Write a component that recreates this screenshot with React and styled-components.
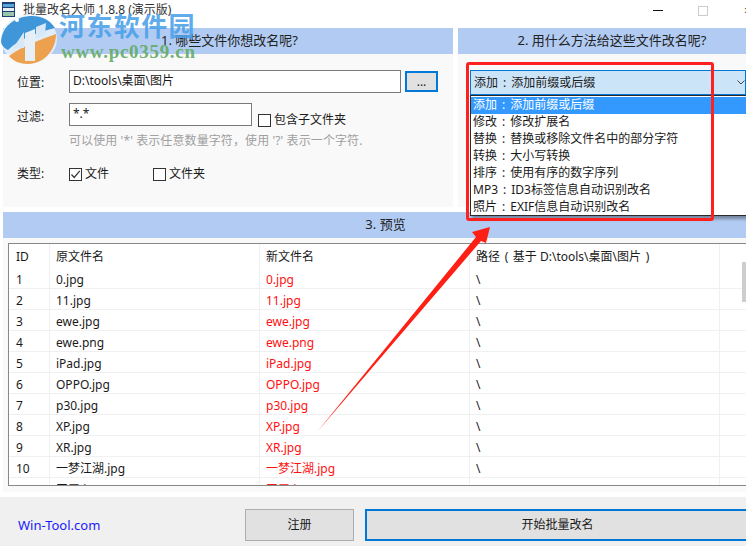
import styled, { createGlobalStyle } from 'styled-components';

const FONT = '"Noto Sans", "Noto Sans CJK SC", sans-serif';

const GlobalStyle = createGlobalStyle`
  html, body {
    margin: 0;
    padding: 0;
    background: #fff;
  }
  * {
    box-sizing: border-box;
  }
`;

const Window = styled.div`
  position: relative;
  width: 746px;
  height: 546px;
  overflow: hidden;
  background: #fff;
  color: #1a1a1a;
  font-family: ${FONT};
  font-size: 12px;
  display: flex;
  flex-direction: column;
`;

const TitleBar = styled.div`
  height: 28px;
  flex: none;
  display: flex;
  align-items: flex-start;
  padding: 1px 0 0 1px;
  position: relative;
`;

const TitleText = styled.span`
  margin-left: 7px;
  line-height: 18px;
  color: #333;
`;

const WinControls = styled.div`
  margin-left: auto;
  display: flex;
  align-items: flex-start;
`;

const MinBtn = styled.span`
  width: 10px;
  height: 1px;
  background: #111;
  margin: 9px 35px 0 0;
`;

const MaxBtn = styled.span`
  width: 10px;
  height: 10px;
  border: 1px solid #ccc;
  margin: 5px 36px 0 0;
`;

const CloseGlyph = styled.span`
  width: 2px;
  height: 10px;
  margin-top: 5px;
  overflow: hidden;
  font-size: 12px;
  line-height: 10px;
  color: #444;
`;

const TopGrid = styled.div`
  display: grid;
  grid-template-columns: 450px 288px;
  column-gap: 5px;
  padding-left: 3px;
  flex: none;
`;

const Section = styled.section`
  height: 179px;
  background: #f9f9f9;
  display: flex;
  flex-direction: column;
`;

const SectionHead = styled.h2`
  margin: 0;
  height: 26px;
  flex: none;
  background: #b1cbf3;
  font-weight: 400;
  font-size: 13px;
  line-height: 25px;
  text-align: center;
  color: #222;
  padding-left: ${({ $shift }) => $shift || 0}px;
`;

const Form = styled.div`
  padding: 16px 15px 0 14px;
  display: flex;
  flex-direction: column;
`;

const FormRow = styled.div`
  display: flex;
  align-items: ${({ $align }) => $align || 'center'};
  margin-bottom: ${({ $mb }) => $mb || 0}px;
`;

const Label = styled.span`
  width: 52px;
  flex: none;
  line-height: 18px;
  margin-top: ${({ $top }) => $top || 0}px;
`;

const TextBox = styled.div`
  height: ${({ $h }) => $h}px;
  width: ${({ $w }) => $w}px;
  background: #fff;
  border: 1px solid #7a7a7a;
  padding-left: 3px;
  line-height: ${({ $h }) => $h - 4}px;
  flex: none;
`;

const BrowseBtn = styled.button`
  width: 33px;
  height: 21px;
  margin: 1px 0 0 4px;
  padding: 0;
  border: 2px solid #0078d7;
  background: #e1e1e1;
  font: 12px/14px ${FONT};
  color: #222;
`;

const Hint = styled.div`
  margin: 3px 0 15px 52px;
  color: #a0a0a0;
  line-height: 18px;
  letter-spacing: 0.1px;
  white-space: nowrap;
`;

const CheckWrap = styled.label`
  display: flex;
  align-items: center;
  line-height: 18px;
  width: ${({ $w }) => ($w ? `${$w}px` : 'auto')};
  margin: ${({ $m }) => $m || 0};
`;

const Box = styled.span`
  width: 13px;
  height: 13px;
  border: 1px solid #333;
  background: #fff;
  margin-right: 3px;
  display: flex;
  flex: none;
`;

const Check = ({ checked }) => (
  <Box>
    {checked && (
      <svg width="11" height="11" viewBox="0 0 11 11">
        <path d="M1.5 5.5 L4.2 8.5 L9.8 1.8" fill="none" stroke="#333" strokeWidth="1.2" />
      </svg>
    )}
  </Box>
);

const ComboArea = styled.div`
  padding: 16px 0 0 12px;
`;

const Combo = styled.div`
  height: 25px;
  background: #cce4f7;
  border: 1px solid #0078d7;
  padding-left: 3px;
  line-height: 23px;
  display: flex;
  justify-content: space-between;
`;

const ComboArrow = styled.svg`
  margin: 9px 0 0 0;
`;

const DropList = styled.ul`
  position: absolute;
  left: 470px;
  top: 95px;
  width: 276px;
  height: 121px;
  margin: 0;
  padding: 1px 0 0;
  list-style: none;
  background: #fff;
  border: 1px solid #2a2a2a;
  border-right: 0;
  box-shadow: 2px 3px 3px rgba(0, 0, 0, 0.35);
  z-index: 2;
`;

const DropItem = styled.li`
  height: 17px;
  line-height: 16px;
  padding-left: 2px;
  white-space: nowrap;
  background: ${({ $active }) => ($active ? '#3399ff' : 'transparent')};
  color: ${({ $active }) => ($active ? '#fff' : '#1a1a1a')};
`;

const Spaced = styled.span`
  margin: 0 ${({ $gap }) => $gap}px;
`;

const PreviewHead = styled(SectionHead)`
  margin: 5px 0 0 3px;
`;

const PreviewBody = styled.div`
  height: 254px;
  flex: none;
  margin-left: 3px;
  padding: 5px 0 6px 5px;
  background: #f9f9f9;
`;

const TableBox = styled.div`
  position: relative;
  height: 243px;
  background: #fff;
  border: 1px solid #888;
  border-right: 0;
  overflow: hidden;
`;

const Columns = styled.div`
  display: grid;
  grid-template-columns: 41px 210px 210px 250px 1fr;
  height: ${({ $h }) => $h}px;
  border-bottom: ${({ $head }) => ($head ? '0' : '1px solid #f0f0f0')};
`;

const Cell = styled.div`
  padding: ${({ $head }) => ($head ? 1 : 2)}px 0 0 ${({ $first }) => ($first ? 7 : 6)}px;
  border-right: 1px solid #f0f0f0;
  line-height: ${({ $head }) => ($head ? 24 : 20)}px;
  white-space: nowrap;
  color: ${({ $red }) => ($red ? '#ff1010' : '#1a1a1a')};
`;

const ScrollThumb = styled.div`
  position: absolute;
  right: 0;
  top: 18px;
  width: 4px;
  height: 40px;
  background: #cdcdcd;
`;

const Footer = styled.footer`
  flex: 1;
  margin-top: 5px;
  background: #f0f0f0;
  display: flex;
  align-items: flex-start;
  padding: 12px 0 0 18px;
`;

const SiteLink = styled.a`
  width: 227px;
  flex: none;
  margin-top: 7px;
  color: #1a1aff;
  font-size: 13px;
  line-height: 18px;
`;

const FootBtn = styled.button`
  height: 32px;
  flex: none;
  width: ${({ $w }) => $w}px;
  margin-right: ${({ $mr }) => $mr || 0}px;
  background: #e1e1e1;
  border: ${({ $primary }) => ($primary ? '2px solid #0078d7' : '1px solid #adadad')};
  font: 12px/16px ${FONT};
  color: #1a1a1a;
  padding: 0;
`;

const RedFrame = styled.div`
  position: absolute;
  left: 466px;
  top: 62px;
  width: 248px;
  height: 159px;
  border: 3px solid #ff2020;
  border-radius: 3px;
  z-index: 3;
`;

const ArrowSvg = styled.svg`
  position: absolute;
  left: 300px;
  top: 215px;
  z-index: 3;
`;

const Watermark = styled.div`
  position: absolute;
  left: 0;
  top: 12px;
  width: 200px;
  height: 52px;
  z-index: 4;
  pointer-events: none;
`;

const LogoSvg = styled.svg`
  position: absolute;
  left: 0;
  top: 2px;
`;

const WmTitle = styled.div`
  position: absolute;
  left: 59px;
  top: -2px;
  font: 700 26px/30px "Noto Sans CJK SC", serif;
  letter-spacing: 1.4px;
  color: rgba(74, 160, 232, 0.9);
  white-space: nowrap;
`;

const WmUrl = styled.div`
  position: absolute;
  left: 61px;
  top: 30px;
  font: 700 19px/20px "Liberation Serif", serif;
  letter-spacing: 0.7px;
  color: rgba(96, 170, 96, 0.9);
  white-space: nowrap;
`;

const METHODS = [
  ['添加', '添加前缀或后缀'],
  ['修改', '修改扩展名'],
  ['替换', '替换或移除文件名中的部分字符'],
  ['转换', '大小写转换'],
  ['排序', '使用有序的数字序列'],
  ['MP3', 'ID3标签信息自动识别改名'],
  ['照片', 'EXIF信息自动识别改名'],
];

const FILES = [
  '0.jpg',
  '11.jpg',
  'ewe.jpg',
  'ewe.png',
  'iPad.jpg',
  'OPPO.jpg',
  'p30.jpg',
  'XP.jpg',
  'XR.jpg',
  '一梦江湖.jpg',
  '王五.jpg',
];

const Method = ({ item }) => (
  <span>
    {item[0]}
    <Spaced $gap={5}>:</Spaced>
    {item[1]}
  </span>
);

const App = () => (
  <Window>
    <GlobalStyle />
    <TitleBar>
      <svg width="15" height="17" viewBox="0 0 15 17">
        <rect x="1" y="1" width="13" height="15" fill="#1c3f7a" />
        <rect x="2" y="3" width="11" height="3" fill="#58a6d8" />
        <rect x="2" y="7" width="11" height="3" fill="#e8eef4" />
        <rect x="2" y="11" width="11" height="4" fill="#9cc6a8" />
      </svg>
      <TitleText>批量改名大师 1.8.8 (演示版)</TitleText>
      <WinControls>
        <MinBtn />
        <MaxBtn />
        <CloseGlyph>×</CloseGlyph>
      </WinControls>
    </TitleBar>

    <TopGrid>
      <Section>
        <SectionHead $shift={3}>1. 哪些文件你想改名呢?</SectionHead>
        <Form>
          <FormRow $align="flex-start" $mb={10}>
            <Label $top={4}>位置:</Label>
            <TextBox $w={332} $h={23}>D:\tools\桌面\图片</TextBox>
            <BrowseBtn>...</BrowseBtn>
          </FormRow>
          <FormRow $align="flex-start">
            <Label $top={5}>过滤:</Label>
            <TextBox $w={183} $h={23}>*.*</TextBox>
            <CheckWrap $m="8px 0 0 6px">
              <Check />
              包含子文件夹
            </CheckWrap>
          </FormRow>
          <Hint>可以使用 '*' 表示任意数量字符，使用 '?' 表示一个字符.</Hint>
          <FormRow>
            <Label>类型:</Label>
            <CheckWrap $w={84}>
              <Check checked />
              文件
            </CheckWrap>
            <CheckWrap>
              <Check />
              文件夹
            </CheckWrap>
          </FormRow>
        </Form>
      </Section>
      <Section>
        <SectionHead $shift={20}>2. 用什么方法给这些文件改名呢?</SectionHead>
        <ComboArea>
          <Combo>
            <Method item={METHODS[0]} />
            <ComboArrow width="8" height="5" viewBox="0 0 8 5">
              <path d="M0.5 0.5 L4 4 L7.5 0.5" fill="none" stroke="#444" />
            </ComboArrow>
          </Combo>
        </ComboArea>
      </Section>
    </TopGrid>

    <PreviewHead $shift={22}>3. 预览</PreviewHead>
    <PreviewBody>
      <TableBox>
        <Columns $head $h={24}>
          <Cell $head $first>ID</Cell>
          <Cell $head>原文件名</Cell>
          <Cell $head>新文件名</Cell>
          <Cell $head>
            路径 <Spaced $gap={1.5}>(</Spaced> 基于 D:\tools\桌面\图片 <Spaced $gap={1.5}>)</Spaced>
          </Cell>
          <div />
        </Columns>
        {FILES.map((name, i) => (
          <Columns key={name} $h={21}>
            <Cell $first>{i + 1}</Cell>
            <Cell>{name}</Cell>
            <Cell $red>{name}</Cell>
            <Cell>\</Cell>
            <div />
          </Columns>
        ))}
        <ScrollThumb />
      </TableBox>
    </PreviewBody>

    <Footer>
      <SiteLink>Win-Tool.com</SiteLink>
      <FootBtn $w={109} $mr={11}>注册</FootBtn>
      <FootBtn $w={385} $primary>开始批量改名</FootBtn>
    </Footer>

    <DropList>
      {METHODS.map((m, i) => (
        <DropItem key={m[0]} $active={i === 0}>
          <Method item={m} />
        </DropItem>
      ))}
    </DropList>

    <RedFrame />
    <ArrowSvg width="200" height="225" viewBox="0 0 200 225">
      <path d="M17 217 L176 22 L172 17 L190 12 L186 28 L181 26 Z" fill="#ff2015" />
    </ArrowSvg>

    <Watermark>
      <LogoSvg width="58" height="52" viewBox="0 0 58 52">
        <ellipse cx="29" cy="25" rx="28" ry="25" fill="rgba(235,245,252,0.8)" />
        <path d="M1 28 C2 10 18 2 32 2 C42 2 50 6 55 14 C40 18 20 24 8 36 C4 34 2 32 1 28 Z" fill="#3f97da" />
        <path d="M9 42 C22 32 40 26 56 20 C56 36 44 50 28 50 C20 50 13 47 9 42 Z" fill="#eda04e" />
        <path d="M13 34 L24 18 L24 34 L17 34 Z" fill="#d8e8f6" />
        <path d="M25 19 L35 15 L35 47 L25 47 Z" fill="#e6eef6" />
        <path d="M36 13 L46 9 L45 21 L36 24 Z" fill="#d8e8f6" />
        <circle cx="17" cy="6" r="2" fill="#fff" />
      </LogoSvg>
      <WmTitle>河东软件园</WmTitle>
      <WmUrl>www.pc0359.cn</WmUrl>
    </Watermark>
  </Window>
);

export default App;
